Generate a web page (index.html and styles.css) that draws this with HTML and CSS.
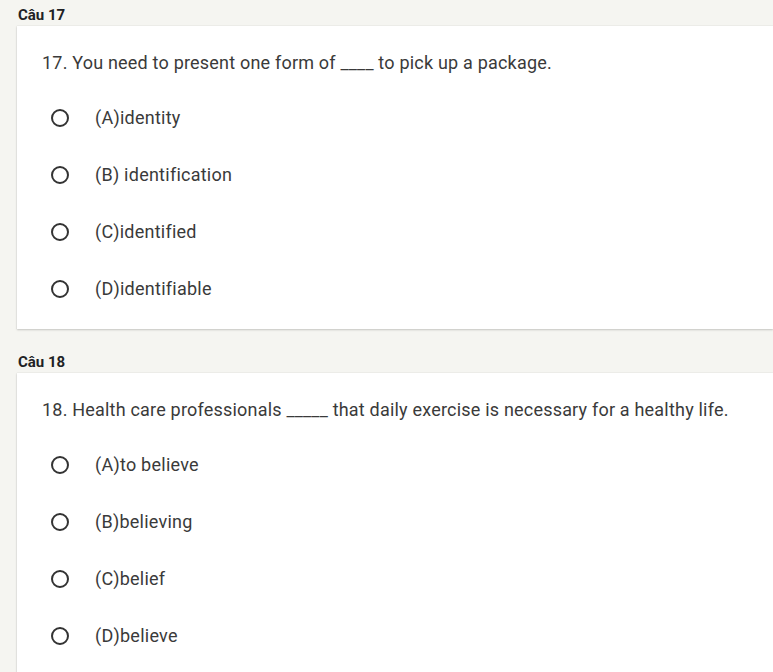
FILE: index.html
```html
<!DOCTYPE html>
<html lang="vi">
<head>
<meta charset="utf-8">
<title>Quiz</title>
<link rel="stylesheet" href="styles.css">
</head>
<body>
<main class="page">
  <section class="q">
    <div class="q-label">Câu 17</div>
    <div class="card">
      <div class="q-text">17. You need to present one form of ____ to pick up a package.</div>
      <ul class="opts">
        <li class="opt"><span class="radio"></span><span class="opt-text">(A)identity</span></li>
        <li class="opt"><span class="radio"></span><span class="opt-text">(B) identification</span></li>
        <li class="opt"><span class="radio"></span><span class="opt-text">(C)identified</span></li>
        <li class="opt"><span class="radio"></span><span class="opt-text">(D)identifiable</span></li>
      </ul>
    </div>
  </section>
  <section class="q">
    <div class="q-label">Câu 18</div>
    <div class="card">
      <div class="q-text">18. Health care professionals _____ that daily exercise is necessary for a healthy life.</div>
      <ul class="opts">
        <li class="opt"><span class="radio"></span><span class="opt-text">(A)to believe</span></li>
        <li class="opt"><span class="radio"></span><span class="opt-text">(B)believing</span></li>
        <li class="opt"><span class="radio"></span><span class="opt-text">(C)belief</span></li>
        <li class="opt"><span class="radio"></span><span class="opt-text">(D)believe</span></li>
      </ul>
    </div>
  </section>
</main>
</body>
</html>
```
FILE: styles.css
```css
html, body {
  margin: 0;
  padding: 0;
  background: #f5f5f1;
  overflow: hidden;
}
body {
  font-family: Roboto, "Liberation Sans", Arial, sans-serif;
  color: #3a3a3a;
}
.page {
  padding: 5px 0 0 17px;
}
.q {
  margin-bottom: 23px;
}
.q-label {
  font-size: 15px;
  font-weight: 700;
  line-height: 20px;
  color: #202124;
  padding-left: 1px;
  margin-bottom: 1px;
}
.card {
  background: #fff;
  padding: 25px 0 12px 25px;
  box-shadow: 0 1px 2px rgba(0,0,0,0.18), 0 0 1px rgba(0,0,0,0.15);
}
.q-text {
  font-size: 18px;
  line-height: 24px;
  color: #3a3a3a;
  letter-spacing: 0.2px;
}
.opts {
  list-style: none;
  margin: 14px 0 0 0;
  padding: 0;
}
.opt {
  display: flex;
  align-items: center;
  height: 57px;
}
.radio {
  width: 14px;
  height: 14px;
  border: 2px solid #333;
  border-radius: 50%;
  margin-left: 9px;
  flex: none;
}
.opt-text {
  margin-left: 26px;
  font-size: 18px;
  line-height: 24px;
  color: #3a3a3a;
  letter-spacing: 0.25px;
}
```
